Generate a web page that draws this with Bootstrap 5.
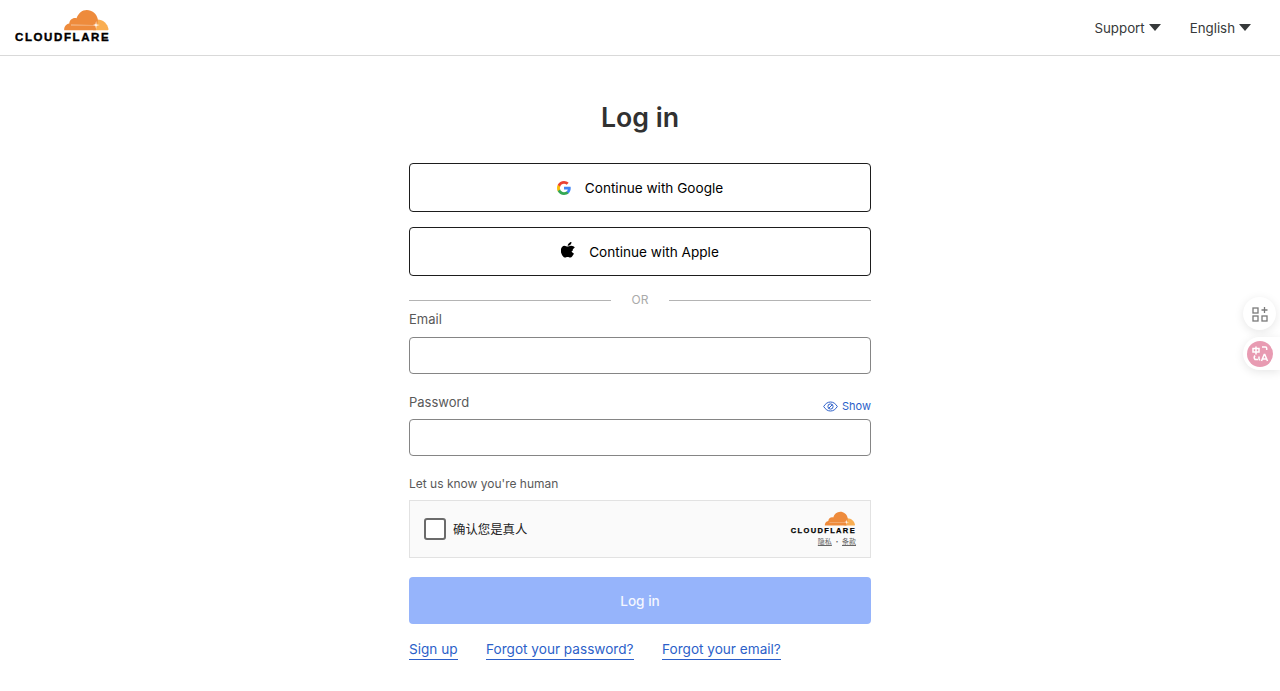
<!DOCTYPE html>
<html lang="en">
<head>
    <meta charset="UTF-8">
    <meta name="viewport" content="width=device-width, initial-scale=1.0">
    <title>Log in | Cloudflare</title>
    <link href="https://cdn.jsdelivr.net/npm/bootstrap@5.3.3/dist/css/bootstrap.min.css" rel="stylesheet">
    <style>
        body {
            font-family: Inter, "Noto Sans CJK SC", sans-serif;
            color: #313131;
            background: #fff;
            height: 691px;
            overflow: hidden;
        }
        .top-bar {
            height: 56px;
            border-bottom: 1px solid #d9d9d9;
            padding: 0 29px 0 15px;
        }
        .brand { width: 95px; height: 36px; margin-top: 9px; }
        .brand svg { display: block; margin-left: 48px; width: 47px; height: 23px; }
        .brand-word {
            display: block;
            font-family: "Liberation Sans", sans-serif;
            font-weight: 700;
            font-size: 11.5px;
            line-height: 10px;
            letter-spacing: 1.6px;
            color: #000;
            -webkit-text-stroke: .4px #000;
            white-space: nowrap;
        }
        .top-nav { gap: 29px; margin-top: 19px; }
        .top-link { font-size: 13.3px; color: #36393a; text-decoration: none; }
        .caret-down {
            width: 0; height: 0;
            border-left: 6.5px solid transparent;
            border-right: 6.5px solid transparent;
            border-top: 7px solid #36393a;
            margin-left: 4px;
            margin-top: -2px;
        }
        .login-col { width: 462px; margin: 0 auto; }
        .login-title { font-size: 26.7px; font-weight: 600; line-height: 34px; margin: 44px 0 29px; text-align: center; color: #313131; }
        .sso-btn {
            height: 49px;
            border: 1px solid #1d1d1d;
            border-radius: 4px;
            background: #fff;
            color: #000;
            font-size: 13.6px;
            margin-bottom: 15px;
            gap: 14px;
        }
        .sso-btn span { padding-top: 2px; }
        .or-row { color: #aaa; font-size: 12px; height: 20px; margin-top: -1px; gap: 21px; }
        .or-row hr { flex: 1; margin: 0; border-color: #b4b4b4; opacity: 1; }
        .field-label { display: block; font-size: 13px; color: #595959; line-height: 20px; margin: 0; }
        .field-input {
            height: 37px;
            border: 1px solid #858585;
            border-radius: 4px;
            box-shadow: none;
        }
        .email-label { margin-top: -1px; margin-bottom: 8px; }
        .pass-row { margin-top: 18px; margin-bottom: 7px; }
        .human-label { font-size: 12px; margin-top: 18px; margin-bottom: 6px; }
        .show-link { font-size: 11px; color: #2c5fc9; text-decoration: none; gap: 4px; line-height: 14px; margin-bottom: -1px; }
        .human-box {
            height: 58px;
            background: #fafafa;
            border: 1px solid #e2e2e2;
            padding: 0 14px;
        }
        .fake-check { width: 22px; height: 22px; border: 2px solid #6b6b6b; border-radius: 3px; background: #fff; margin-right: 7px; }
        .human-text { font-size: 12.4px; color: #232323; font-family: "Noto Sans CJK SC", sans-serif; }
        .mini-brand { width: 66px; text-align: right; margin-top: -1px; }
        .mini-brand svg { display: block; margin-left: auto; width: 32px; height: 16px; }
        .mini-word {
            display: block;
            font-family: "Liberation Sans", sans-serif;
            font-weight: 700;
            font-size: 7.5px;
            line-height: 8px;
            letter-spacing: 1.35px;
            color: #000;
            white-space: nowrap;
            -webkit-text-stroke: .25px #000;
        }
        .mini-links { display: block; font-family: "Noto Sans CJK SC", sans-serif; font-size: 7px; line-height: 10px; color: #666; margin-top: 1px; }
        .mini-links u { text-underline-offset: 1px; }
        .submit-btn {
            height: 47px;
            border: 0;
            border-radius: 4px;
            font-size: 13.6px;
            font-weight: 500;
            margin-top: 19px;
            padding-top: 8px;
        }
        .submit-btn:disabled { background: #96b4fb; color: #f4f7ff; opacity: 1; }
        .foot-links { gap: 28.5px; margin-top: 16px; }
        .foot-links a { font-size: 13.6px; color: #2c5fc9; text-decoration: none; border-bottom: 1px solid #2c5fc9; line-height: 19px; }
        .float-tool {
            position: absolute;
            width: 33px; height: 33px;
            background: #fff;
            border-radius: 50%;
            box-shadow: 0 2px 10px rgba(0,0,0,.1);
            right: 4px;
        }
        .float-tool.tab {
            right: 0; width: 37px;
            border-radius: 17px 0 0 17px;
            padding-left: 4px;
        }
    </style>
</head>
<body>
    <header class="top-bar d-flex justify-content-between align-items-start">
        <div class="brand">
            <svg viewBox="0 0 47 23"><path fill="#f9ae52" d="M30 21.200l2-10.500c.8-.2 1.600-.3 2.500-.3 5.500 0 10 4.200 11 9.700.1.600-.2 1.100-.8 1.100z"/><path fill="#ee8b3c" d="M1.200 21.200C.9 17.600 3.100 14.800 6.300 14.400 6.500 10.700 10 8.200 13.500 9.200 15.300 4.300 19 .9 23.800.9c5.300 0 9.800 3.700 10.900 8.800.5 2.300-.2 4.500-.9 6.500-.6 1.700-.9 3.300-1 5z"/><path fill="#fff" d="M8 15.800l22 .1 2.500-.6.6-3.200.5 3.300 3.200.7-3.200.6-.5 3.200-.7-3.100-2.500-.5L8 16.300z"/></svg>
            <span class="brand-word">CLOUDFLARE</span>
        </div>
        <nav class="top-nav d-flex">
            <a href="#" class="top-link d-flex align-items-center">Support <span class="caret-down"></span></a>
            <a href="#" class="top-link d-flex align-items-center">English <span class="caret-down"></span></a>
        </nav>
    </header>

    <main class="login-col">
        <h1 class="login-title">Log in</h1>

        <button class="sso-btn btn w-100 d-flex justify-content-center align-items-center" type="button">
            <svg width="14" height="14" viewBox="0 0 24 24"><path fill="#4285f4" d="M23.500 12.300c0-.8-.1-1.600-.2-2.400H12v4.500h6.500c-.3 1.500-1.100 2.800-2.400 3.600v3h3.900c2.200-2.100 3.500-5.100 3.500-8.700z"/><path fill="#34a853" d="M12 24c3.200 0 6-1.100 8-2.900l-3.900-3c-1.100.7-2.500 1.200-4.100 1.200-3.100 0-5.800-2.100-6.700-5H1.300v3.100C3.300 21.300 7.300 24 12 24z"/><path fill="#fbbc05" d="M5.300 14.300c-.5-1.500-.5-3.100 0-4.600V6.600h-4c-1.700 3.400-1.700 7.400 0 10.800z"/><path fill="#ea4335" d="M12 4.800c1.800 0 3.400.6 4.600 1.800l3.400-3.400C17.900 1.200 15.100 0 12 0 7.300 0 3.300 2.700 1.300 6.600l4 3.100c.9-2.800 3.600-4.900 6.700-4.900z"/></svg>
            <span>Continue with Google</span>
        </button>
        <button class="sso-btn btn w-100 d-flex justify-content-center align-items-center" type="button">
            <svg width="14" height="17" viewBox="0 0 14 17" style="margin-top:-3px"><path fill="#000" d="M11.600 9c0-1.500.8-2.600 2.200-3.400-.8-1.200-2-1.800-3.600-1.900-1.500-.1-3.100.9-3.700.9-.6 0-2-.9-3.200-.9C1.400 3.800-.2 5.700-.2 8.600c0 .9.200 1.800.5 2.700.4 1.200 2 4.300 3.700 4.200.9 0 1.500-.6 2.600-.6 1.100 0 1.700.6 2.700.6 1.700 0 3.100-2.800 3.600-4-2.100-1-2.300-2.400-2.300-2.500zM9.600 2.600C10.500 1.500 10.500.6 10.400 0 9.400 0 8.300.7 7.700 1.400 7 2.200 6.600 3 6.700 3.800c1.100.1 2.100-.4 2.900-1.200z"/></svg>
            <span>Continue with Apple</span>
        </button>

        <div class="or-row d-flex align-items-center">
            <hr><span>OR</span><hr>
        </div>

        <label class="field-label email-label" for="email">Email</label>
        <input id="email" class="field-input form-control" type="email">

        <div class="pass-row d-flex justify-content-between align-items-end">
            <label class="field-label" for="password">Password</label>
            <a href="#" class="show-link d-flex align-items-center">
                <svg width="15" height="11" viewBox="0 0 15 11" fill="none" stroke="#2c5fc9" stroke-width="1"><path d="M.7 5.500C2.500 2.500 4.800 1 7.500 1s5 1.500 6.800 4.500C12.500 8.500 10.200 10 7.500 10S2.500 8.500.7 5.500z"/><circle cx="7.500" cy="5.500" r="2.600"/><path d="M5.700 7.300l3.600-3.600"/></svg>
                Show
            </a>
        </div>
        <input id="password" class="field-input form-control" type="password">

        <p class="field-label human-label">Let us know you're human</p>
        <div class="human-box d-flex align-items-center">
            <span class="fake-check"></span>
            <span class="human-text">确认您是真人</span>
            <div class="mini-brand ms-auto">
                <svg viewBox="0 0 47 23"><path fill="#f9ae52" d="M30 21.200l2-10.500c.8-.2 1.600-.3 2.500-.3 5.500 0 10 4.200 11 9.700.1.600-.2 1.100-.8 1.100z"/><path fill="#ee8b3c" d="M1.200 21.200C.9 17.600 3.100 14.800 6.300 14.400 6.500 10.700 10 8.200 13.500 9.200 15.300 4.300 19 .9 23.800.9c5.300 0 9.800 3.700 10.900 8.800.5 2.300-.2 4.500-.9 6.500-.6 1.700-.9 3.300-1 5z"/><path fill="#fff" d="M8 15.800l22 .1 2.500-.6.6-3.200.5 3.300 3.200.7-3.200.6-.5 3.200-.7-3.100-2.500-.5L8 16.300z"/></svg>
                <span class="mini-word">CLOUDFLARE</span>
                <span class="mini-links"><u>隐私</u> · <u>条款</u></span>
            </div>
        </div>

        <button class="submit-btn btn w-100" type="submit" disabled>Log in</button>

        <div class="foot-links d-flex">
            <a href="#">Sign up</a>
            <a href="#">Forgot your password?</a>
            <a href="#">Forgot your email?</a>
        </div>
    </main>

    <div class="float-tool d-flex align-items-center justify-content-center" style="top:297px;">
        <svg width="16" height="16" viewBox="0 0 16 16" fill="none" stroke="#7a7a7a" stroke-width="1.300"><rect x="1" y="2" width="5" height="5"/><rect x="1" y="10" width="5" height="5"/><rect x="10" y="10" width="5" height="5"/><path d="M12.500 1v6M9.500 4h6"/></svg>
    </div>
    <div class="float-tool tab d-flex align-items-center" style="top:337px;">
        <svg width="26" height="26" viewBox="0 0 26 26"><circle cx="13" cy="13" r="13" fill="#e89bb2"/><g fill="none" stroke="#fff" stroke-width="1.500"><rect x="6" y="7.500" width="6" height="3.500"/><path d="M9 5.500v8M15 6h3.500c.8 0 1.200.5 1.200 1.200V9M12 15.500v2.300c0 .7.500 1.200 1.200 1.200M8 14.500c-.8 1-1 2.800 0 4h3"/><path d="M14.500 20l2.700-6.500h.6l2.700 6.500M15.500 18h4"/></g></svg>
    </div>

    <script src="https://cdn.jsdelivr.net/npm/bootstrap@5.3.3/dist/js/bootstrap.bundle.min.js"></script>
</body>
</html>
